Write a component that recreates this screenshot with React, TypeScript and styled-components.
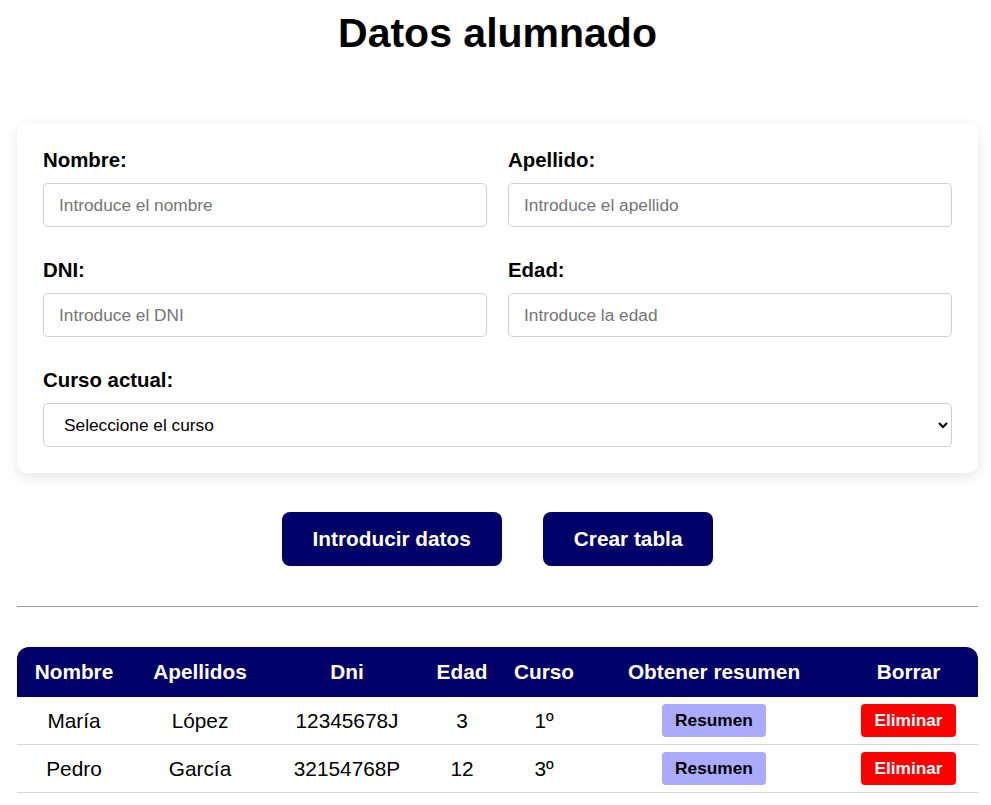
import React from "react";
import styled, { createGlobalStyle } from "styled-components";

const GlobalStyle = createGlobalStyle`
  html, body { margin: 0; padding: 0; background: #ffffff; }
  body { font-family: "Liberation Sans", Arial, sans-serif; color: #000; }
  * { box-sizing: border-box; }
`;

const Page = styled.div`
  padding: 10px 13px 20px 17px;
`;

const Title = styled.h1`
  margin: 0 0 66px;
  font-size: 41px;
  font-weight: bold;
  text-align: center;
  line-height: 47px;
`;

const Card = styled.form`
  background: #fff;
  border-radius: 10px;
  box-shadow: 0 4px 14px rgba(0, 0, 0, 0.1);
  padding: 26px;
  display: grid;
  grid-template-columns: 1fr 1fr;
  column-gap: 21px;
  row-gap: 32px;
`;

const Field = styled.div<{ $full?: boolean }>`
  display: flex;
  flex-direction: column;
  grid-column: ${(p) => (p.$full ? "1 / -1" : "auto")};
`;

const Label = styled.label`
  font-size: 20.4px;
  font-weight: bold;
  line-height: 23px;
  margin-bottom: 11px;
`;

const Input = styled.input`
  height: 44px;
  border: 1px solid #d3cfd1;
  border-radius: 5px;
  padding: 0 15px;
  font-family: "Liberation Sans", Arial, sans-serif;
  font-size: 17.3px;
  color: #000;
  background: #fff;
  &::placeholder { color: #757575; }
`;

const Select = styled.select`
  height: 44px;
  border: 1px solid #d3cfd1;
  border-radius: 5px;
  padding: 0 12px 0 16px;
  font-family: "Liberation Sans", Arial, sans-serif;
  font-size: 17.3px;
  color: #000;
  background: #fff;
`;

const Actions = styled.div`
  display: flex;
  justify-content: center;
  gap: 41px;
  margin: 39px 0 40px;
`;

const PrimaryButton = styled.button`
  height: 54px;
  padding: 0 31px;
  background: #000068;
  color: #fff;
  border: none;
  border-radius: 8px;
  font-family: "Liberation Sans", Arial, sans-serif;
  font-size: 20.8px;
  font-weight: bold;
`;

const Divider = styled.hr`
  margin: 0 0 40px;
  border: none;
  border-top: 1px solid #9a9a9a;
  height: 0;
`;

const Table = styled.table`
  width: 100%;
  table-layout: fixed;
  border-collapse: separate;
  border-spacing: 0;
`;

const Col = styled.col<{ $w: number }>`
  width: ${(p) => p.$w}px;
`;

const Th = styled.th<{ $pos?: "first" | "last" }>`
  height: 50px;
  background: #000068;
  color: #fff;
  font-size: 20.8px;
  font-weight: bold;
  text-align: center;
  padding: 0;
  white-space: nowrap;
  border-top-left-radius: ${(p) => (p.$pos === "first" ? "12px" : "0")};
  border-top-right-radius: ${(p) => (p.$pos === "last" ? "12px" : "0")};
`;

const Td = styled.td`
  height: 48px;
  font-size: 20.8px;
  text-align: center;
  padding: 0;
  border-bottom: 1px solid #d6d6d6;
  white-space: nowrap;
`;

const SmallButton = styled.button<{ $variant: "resumen" | "eliminar" }>`
  height: 33px;
  padding: 0 13px;
  border: none;
  border-radius: 4px;
  font-family: "Liberation Sans", Arial, sans-serif;
  font-size: 17.3px;
  font-weight: bold;
  background: ${(p) => (p.$variant === "resumen" ? "#aaaaff" : "#ff0000")};
  color: ${(p) => (p.$variant === "resumen" ? "#000" : "#fff")};
  vertical-align: middle;
`;

const widths = [114, 138, 156, 74, 90, 250, 139];
const headers = ["Nombre", "Apellidos", "Dni", "Edad", "Curso", "Obtener resumen", "Borrar"];
const rows = [
  { nombre: "María", apellidos: "López", dni: "12345678J", edad: "3", curso: "1º" },
  { nombre: "Pedro", apellidos: "García", dni: "32154768P", edad: "12", curso: "3º" },
];

export default function App() {
  return (
    <>
      <GlobalStyle />
      <Page>
        <Title>Datos alumnado</Title>
        <Card onSubmit={(e) => e.preventDefault()}>
          <Field>
            <Label>Nombre:</Label>
            <Input placeholder="Introduce el nombre" />
          </Field>
          <Field>
            <Label>Apellido:</Label>
            <Input placeholder="Introduce el apellido" />
          </Field>
          <Field>
            <Label>DNI:</Label>
            <Input placeholder="Introduce el DNI" />
          </Field>
          <Field>
            <Label>Edad:</Label>
            <Input placeholder="Introduce la edad" />
          </Field>
          <Field $full>
            <Label>Curso actual:</Label>
            <Select defaultValue="">
              <option value="">Seleccione el curso</option>
              <option value="1">1º</option>
              <option value="2">2º</option>
              <option value="3">3º</option>
              <option value="4">4º</option>
            </Select>
          </Field>
        </Card>
        <Actions>
          <PrimaryButton type="button">Introducir datos</PrimaryButton>
          <PrimaryButton type="button">Crear tabla</PrimaryButton>
        </Actions>
        <Divider />
        <Table>
          <colgroup>
            {widths.map((w, i) => (
              <Col key={i} $w={w} />
            ))}
          </colgroup>
          <thead>
            <tr>
              {headers.map((h, i) => (
                <Th key={h} $pos={i === 0 ? "first" : i === headers.length - 1 ? "last" : undefined}>
                  {h}
                </Th>
              ))}
            </tr>
          </thead>
          <tbody>
            {rows.map((r) => (
              <tr key={r.dni}>
                <Td>{r.nombre}</Td>
                <Td>{r.apellidos}</Td>
                <Td>{r.dni}</Td>
                <Td>{r.edad}</Td>
                <Td>{r.curso}</Td>
                <Td>
                  <SmallButton type="button" $variant="resumen">Resumen</SmallButton>
                </Td>
                <Td>
                  <SmallButton type="button" $variant="eliminar">Eliminar</SmallButton>
                </Td>
              </tr>
            ))}
          </tbody>
        </Table>
      </Page>
    </>
  );
}
